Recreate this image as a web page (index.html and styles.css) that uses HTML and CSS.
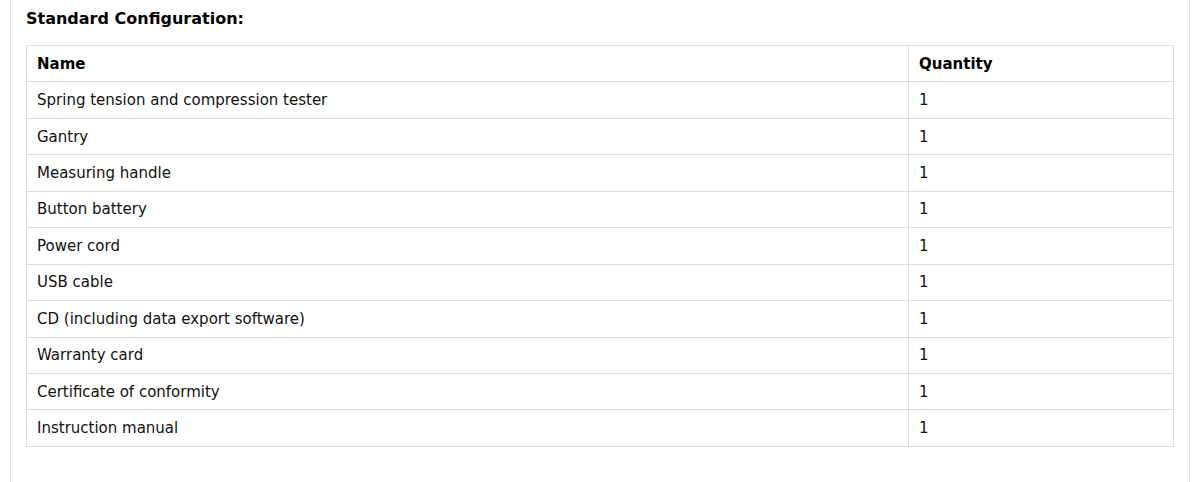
FILE: index.html
```html
<!DOCTYPE html>
<html>
<head>
<meta charset="utf-8">
<link rel="stylesheet" href="styles.css">
</head>
<body>
<div class="panel">
  <h3 class="title">Standard Configuration:</h3>
  <table class="config">
    <thead>
      <tr><th class="col-name">Name</th><th>Quantity</th></tr>
    </thead>
    <tbody>
      <tr><td>Spring tension and compression tester</td><td>1</td></tr>
      <tr><td>Gantry</td><td>1</td></tr>
      <tr><td>Measuring handle</td><td>1</td></tr>
      <tr><td>Button battery</td><td>1</td></tr>
      <tr><td>Power cord</td><td>1</td></tr>
      <tr><td>USB cable</td><td>1</td></tr>
      <tr><td>CD (including data export software)</td><td>1</td></tr>
      <tr><td>Warranty card</td><td>1</td></tr>
      <tr><td>Certificate of conformity</td><td>1</td></tr>
      <tr><td>Instruction manual</td><td>1</td></tr>
    </tbody>
  </table>
</div>
</body>
</html>
```
FILE: styles.css
```css
html, body {
  margin: 0;
  padding: 0;
  background: #fff;
}
body {
  font-family: "DejaVu Sans", Verdana, sans-serif;
  color: #111;
  overflow: hidden;
}
.panel {
  margin-left: 10px;
  width: 1148px;
  padding: 0 15px;
  border-left: 1px solid #e0e0e0;
  border-right: 1px solid #e0e0e0;
  height: 482px;
  box-sizing: content-box;
}
.title {
  margin: 0;
  padding-top: 10px;
  font-size: 16px;
  line-height: 18px;
  font-weight: bold;
  color: #000;
  height: 35px;
}
.config {
  width: 1148px;
  border-collapse: collapse;
  font-size: 15px;
}
.config th,
.config td {
  border: 1px solid #dedede;
  padding: 1px 10px 0;
  height: 34.45px;
  text-align: left;
  vertical-align: middle;
  line-height: 17px;
}
.config th {
  font-weight: bold;
  color: #000;
}
.col-name {
  width: 861px;
}
```
